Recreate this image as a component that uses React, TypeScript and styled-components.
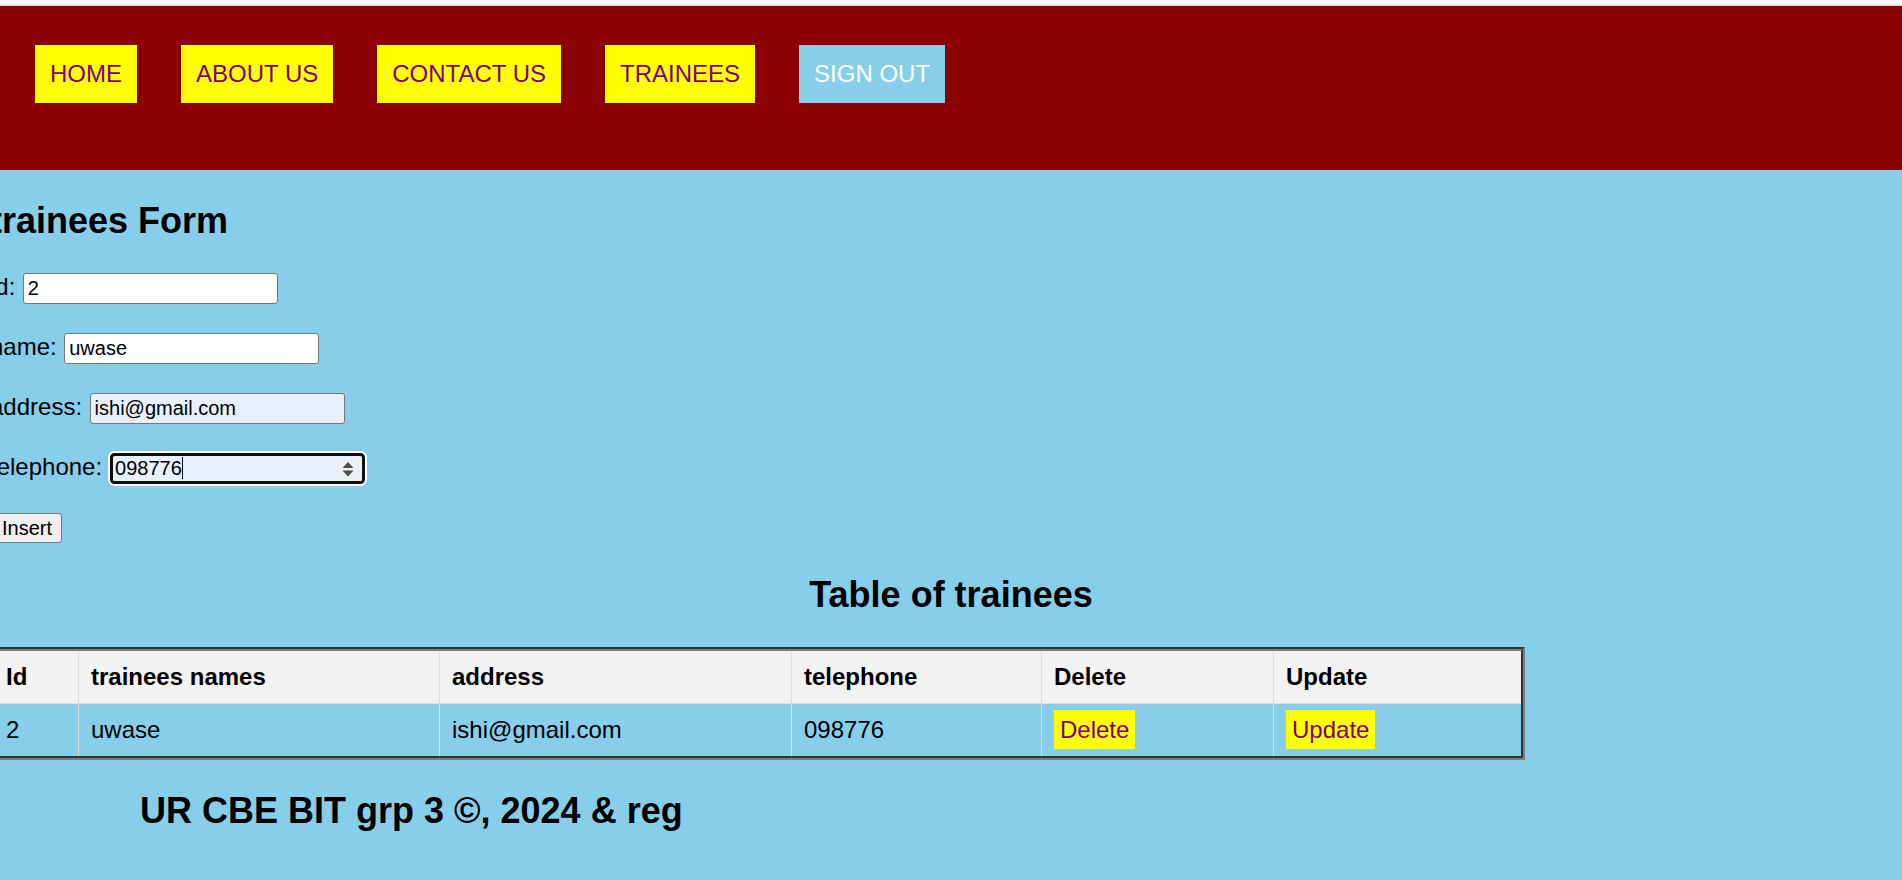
import React from "react";
import styled, { createGlobalStyle } from "styled-components";

const GlobalStyle = createGlobalStyle`
  html, body {
    margin: 0;
    padding: 0;
    background: #87ceeb;
    overflow: hidden;
  }
  body {
    font-family: "Liberation Sans", Arial, sans-serif;
    font-size: 24px;
    color: #000;
  }
  #root {
    min-height: 100vh;
  }
`;

const TopStrip = styled.div`
  height: 4px;
  background: #ffffff;
  border-bottom: 2px solid #e3e3e3;
`;

const Header = styled.header`
  background: #8b0000;
  height: 164px;
  box-sizing: border-box;
  padding: 39px 0 0 35px;
`;

const Nav = styled.nav`
  display: flex;
  align-items: flex-start;
  gap: 44px;
`;

const NavLink = styled.a<{ $signout?: boolean }>`
  display: block;
  padding: 15px;
  font-size: 24px;
  line-height: normal;
  text-decoration: none;
  background: ${(p) => (p.$signout ? "#87ceeb" : "#ffff00")};
  color: ${(p) => (p.$signout ? "#ffffff" : "#800080")};
`;

const Main = styled.main`
  margin: 0 -10px;
`;

const Heading = styled.h2<{ $center?: boolean; $top: number; $bottom: number }>`
  font-size: 36px;
  font-weight: bold;
  line-height: normal;
  margin: ${(p) => `${p.$top}px 0 ${p.$bottom}px`};
  text-align: ${(p) => (p.$center ? "center" : "left")};
`;

const Form = styled.form`
  display: flex;
  flex-direction: column;
  align-items: flex-start;
  gap: 29px;
`;

const Row = styled.div`
  display: flex;
  align-items: baseline;
  gap: 7.5px;
  height: 31px;
`;

const Label = styled.label`
  font-size: 24px;
  line-height: normal;
`;

const InputWrap = styled.span`
  position: relative;
  display: inline-flex;
`;

const TextInput = styled.input<{ $autofill?: boolean; $focused?: boolean }>`
  box-sizing: border-box;
  width: 255px;
  height: 31px;
  font-family: "Liberation Sans", Arial, sans-serif;
  font-size: 20px;
  color: #000;
  outline: none;
  margin: 0;
  background: ${(p) => (p.$autofill ? "#e8f0fe" : "#ffffff")};
  border: ${(p) => (p.$focused ? "3px solid #101010" : "1.5px solid #767676")};
  padding: ${(p) => (p.$focused ? "0 2.5px" : "0 4px")};
  border-radius: ${(p) => (p.$focused ? "4.5px" : "3px")};
  box-shadow: ${(p) => (p.$focused ? "0 0 0 2px #ffffff" : "none")};
`;

const Caret = styled.span`
  position: absolute;
  left: 72px;
  top: 4px;
  width: 1px;
  height: 22px;
  background: #000;
`;

const Spinner = styled.span`
  position: absolute;
  right: 5px;
  top: 5.5px;
  width: 23px;
  height: 20px;
  background: #eeeff2;
  display: flex;
  align-items: center;
  justify-content: center;
`;

const InsertButton = styled.button`
  box-sizing: border-box;
  margin-left: 2px;
  height: 30px;
  padding: 0 9px;
  font-family: "Liberation Sans", Arial, sans-serif;
  font-size: 20px;
  color: #000;
  background: #efefef;
  border: 1.5px solid #767676;
  border-radius: 3px;
`;

const TableFrame = styled.div`
  box-sizing: border-box;
  width: 1535px;
  border: 2px solid;
  border-color: #333333 #7f7f7f #7f7f7f #333333;
`;

const Table = styled.table`
  box-sizing: border-box;
  width: 100%;
  table-layout: fixed;
  border-collapse: separate;
  border-spacing: 0;
  border: 2px solid;
  border-color: #7f7f7f #333333 #333333 #7f7f7f;
`;

const HeadCell = styled.th<{ $w?: number; $last?: boolean }>`
  box-sizing: border-box;
  width: ${(p) => (p.$w ? `${p.$w}px` : "auto")};
  padding: 12px;
  text-align: left;
  font-size: 24px;
  font-weight: bold;
  line-height: normal;
  background: #f2f2f2;
  border-bottom: 1px solid #dddddd;
  border-right: ${(p) => (p.$last ? "none" : "1px solid #dddddd")};
`;

const BodyCell = styled.td<{ $last?: boolean }>`
  box-sizing: border-box;
  padding: 12px;
  font-size: 24px;
  line-height: normal;
  border-right: ${(p) => (p.$last ? "none" : "1px solid #dddddd")};
`;

const ActionLink = styled.a`
  padding: 6px;
  background: #ffff00;
  color: #800080;
  text-decoration: none;
`;

const Footer = styled.footer`
  padding-left: 150px;
`;

function SpinArrows() {
  return (
    <svg width="12" height="16" viewBox="0 0 12 16">
      <path d="M6 1 L11.5 7 L0.5 7 Z" fill="#4d4d4d" />
      <path d="M0.5 9.5 L11.5 9.5 L6 15.5 Z" fill="#4d4d4d" />
    </svg>
  );
}

const columns = [
  { label: "Id", w: 85 },
  { label: "trainees names", w: 361 },
  { label: "address", w: 352 },
  { label: "telephone", w: 250 },
  { label: "Delete", w: 232 },
  { label: "Update", w: 0 },
];

export default function App() {
  return (
    <>
      <GlobalStyle />
      <TopStrip />
      <Header>
        <Nav>
          <NavLink href="#">HOME</NavLink>
          <NavLink href="#">ABOUT US</NavLink>
          <NavLink href="#">CONTACT US</NavLink>
          <NavLink href="#">TRAINEES</NavLink>
          <NavLink href="#" $signout>
            SIGN OUT
          </NavLink>
        </Nav>
      </Header>
      <Main>
        <Heading $top={30} $bottom={31}>
          trainees Form
        </Heading>
        <Form onSubmit={(e) => e.preventDefault()}>
          <Row>
            <Label>id:</Label>
            <TextInput type="text" defaultValue="2" readOnly />
          </Row>
          <Row>
            <Label>name:</Label>
            <TextInput type="text" defaultValue="uwase" readOnly />
          </Row>
          <Row>
            <Label>address:</Label>
            <TextInput type="text" defaultValue="ishi@gmail.com" $autofill readOnly />
          </Row>
          <Row>
            <Label>telephone:</Label>
            <InputWrap>
              <TextInput type="text" defaultValue="098776" $autofill $focused readOnly />
              <Caret />
              <Spinner>
                <SpinArrows />
              </Spinner>
            </InputWrap>
          </Row>
          <InsertButton type="submit">Insert</InsertButton>
        </Form>
        <Heading $center $top={31} $bottom={31}>
          Table of trainees
        </Heading>
        <TableFrame>
          <Table>
            <thead>
              <tr>
                {columns.map((c, i) => (
                  <HeadCell key={c.label} $w={c.w || undefined} $last={i === columns.length - 1}>
                    {c.label}
                  </HeadCell>
                ))}
              </tr>
            </thead>
            <tbody>
              <tr>
                <BodyCell>2</BodyCell>
                <BodyCell>uwase</BodyCell>
                <BodyCell>ishi@gmail.com</BodyCell>
                <BodyCell>098776</BodyCell>
                <BodyCell>
                  <ActionLink href="#">Delete</ActionLink>
                </BodyCell>
                <BodyCell $last>
                  <ActionLink href="#">Update</ActionLink>
                </BodyCell>
              </tr>
            </tbody>
          </Table>
        </TableFrame>
        <Footer>
          <Heading $top={30} $bottom={30}>
            UR CBE BIT grp 3 ©, 2024 &amp; reg
          </Heading>
        </Footer>
      </Main>
    </>
  );
}
